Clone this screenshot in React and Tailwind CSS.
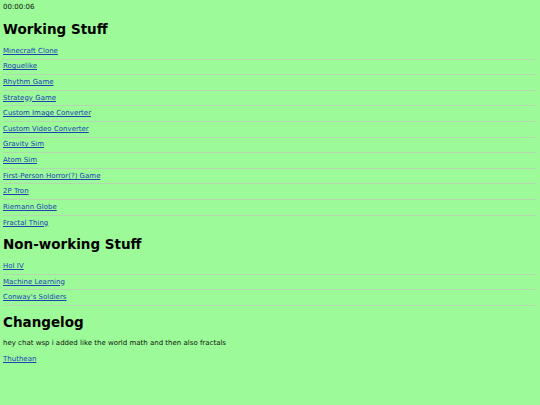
import React from 'react';

const working = [
  'Minecraft Clone',
  'Roguelike',
  'Rhythm Game',
  'Strategy Game',
  'Custom Image Converter',
  'Custom Video Converter',
  'Gravity Sim',
  'Atom Sim',
  'First-Person Horror(?) Game',
  '2P Tron',
  'Riemann Globe',
  'Fractal Thing',
];

const broken = ['HoI IV', 'Machine Learning', "Conway's Soldiers"];

const Row = ({ label, line }) => (
  <div className={`flex items-center h-[15.6px] text-[7px] ${line ? 'border-b border-[#b4d6b0]' : ''}`}>
    <a href="#" className="text-[#2140b8] underline leading-none">
      {label}
    </a>
  </div>
);

export default function App() {
  return (
    <div className="min-h-screen bg-[#9cfb98] px-[3px] pt-[2px] text-black font-['DejaVu_Sans',sans-serif]">
      <div className="text-[7px] leading-[10px] text-[#111]">00:00:06</div>

      <h2 className="mt-[8px] text-[13.5px] leading-[18px] font-bold">Working Stuff</h2>
      <div className="mt-[6px] mr-[1px]">
        {working.map((w, i) => (
          <Row key={w} label={w} line={i < working.length - 1} />
        ))}
      </div>

      <h2 className="mt-[4px] text-[13.5px] leading-[18px] font-bold">Non-working Stuff</h2>
      <div className="mt-[6px] mr-[1px]">
        {broken.map((w) => (
          <Row key={w} label={w} line />
        ))}
      </div>

      <h2 className="mt-[7px] text-[13.5px] leading-[18px] font-bold">Changelog</h2>
      <p className="mt-[5px] text-[7px] leading-[15.6px] text-[#111]">
        hey chat wsp i added like the world math and then also fractals
      </p>
      <div className="text-[7px] leading-[15.6px]">
        <a href="#" className="text-[#2140b8] underline">Thuthean</a>
      </div>
    </div>
  );
}
